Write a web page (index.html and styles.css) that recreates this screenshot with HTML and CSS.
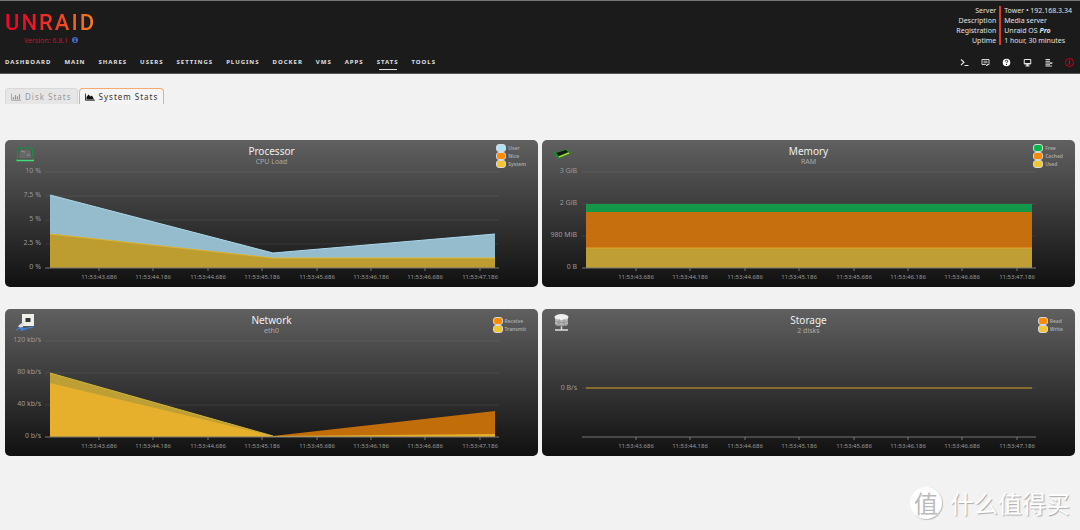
FILE: index.html
```html
<!DOCTYPE html>
<html lang="en">
<head>
<meta charset="utf-8">
<title>Tower/Stats</title>
<link rel="stylesheet" href="styles.css">
</head>
<body>
<svg class="defs" aria-hidden="true">
  <symbol id="time-axis" viewBox="0 0 533 119">
    <path class="axis" d="M40 100H494M94 100v3M148 100v3M203 100v3M257 100v3M312 100v3M366 100v3M420 100v3M475 100v3"/>
    <g class="time">
      <text x="94" y="111">11:53:43.686</text><text x="148" y="111">11:53:44.186</text>
      <text x="203" y="111">11:53:44.686</text><text x="257" y="111">11:53:45.186</text>
      <text x="312" y="111">11:53:45.686</text><text x="366" y="111">11:53:46.186</text>
      <text x="420" y="111">11:53:46.686</text><text x="475" y="111">11:53:47.186</text>
    </g>
  </symbol>
</svg>

<header class="header">
  <div class="top">
    <div class="brand">
      <a class="logo" href="#">UNRAID</a>
      <div class="version">Version: 6.8.1
        <svg class="info" viewBox="0 0 12 12"><circle cx="6" cy="6" r="6" fill="#4a66c4"/><path d="M5 2h2.200v1.800H5zM4.300 5h2.900v3.500h.8V10H4.300V8.500H5V6.300h-.7z" fill="#1c1b1b"/></svg>
      </div>
    </div>
    <div class="server">
      <div class="labels"><span>Server</span><span>Description</span><span>Registration</span><span>Uptime</span></div>
      <div class="values"><span>Tower • 192.168.3.34</span><span>Media server</span><span>Unraid OS <strong><em>Pro</em></strong></span><span>1 hour, 30 minutes</span></div>
    </div>
  </div>
  <div class="bar">
    <nav class="menu">
      <a href="#">DASHBOARD</a><a href="#">MAIN</a><a href="#">SHARES</a><a href="#">USERS</a><a href="#">SETTINGS</a><a href="#">PLUGINS</a><a href="#">DOCKER</a><a href="#">VMS</a><a href="#">APPS</a><a class="current" href="#">STATS</a><a href="#">TOOLS</a>
    </nav>
    <div class="tools">
      <button aria-label="Terminal"><svg viewBox="0 0 18 18"><path d="M2 3l6 5.500L2 14M9 15h8" fill="none" stroke="#e8e8e8" stroke-width="2.200"/></svg></button>
      <button aria-label="Feedback"><svg viewBox="0 0 18 18"><path d="M2 3h14v10h-4v3l-3-3H2z" fill="none" stroke="#e8e8e8" stroke-width="1.800"/><path d="M5 6.500h8M5 9.500h8" stroke="#e8e8e8" stroke-width="1.500"/></svg></button>
      <button aria-label="Help"><svg viewBox="0 0 18 18"><circle cx="9" cy="9" r="7.500" fill="#fff"/><path d="M6.500 7c0-3.500 5-3.300 5-.4C11.500 8.500 9 8.500 9 10.500M9 12v2" fill="none" stroke="#1c1b1b" stroke-width="2"/></svg></button>
      <button aria-label="Info"><svg viewBox="0 0 18 18"><path d="M2.500 3h13v9h-13z" fill="none" stroke="#e8e8e8" stroke-width="2"/><path d="M3 10h12v2H3zM7 12h4v3h2v2H5v-2h2z" fill="#e8e8e8"/></svg></button>
      <button aria-label="Log"><svg viewBox="0 0 18 18"><path d="M3 3h9M3 6.500h9M3 10h13M3 13.500h9M3 16h13" stroke="#d8d8d8" stroke-width="2"/><path d="M12 11l5-1" stroke="#d8d8d8" stroke-width="2"/></svg></button>
      <button aria-label="Alerts"><svg viewBox="0 0 18 18"><circle cx="9" cy="9" r="8" fill="none" stroke="#d3001f" stroke-width="1.800"/><path d="M9 4.500v9" stroke="#d3001f" stroke-width="2.400"/></svg></button>
    </div>
  </div>
</header>

<main class="content">
  <div class="tabs" role="tablist">
    <button class="tab" role="tab" aria-selected="false"><svg viewBox="0 0 20 16"><path d="M1 1v13.500h19" fill="none" stroke="#999" stroke-width="1.600"/><path d="M5 13V8M9 13V4M13 13V6.500M17 13V2.500" stroke="#999" stroke-width="2.400"/></svg>Disk Stats</button>
    <button class="tab active" role="tab" aria-selected="true"><svg viewBox="0 0 20 16"><path d="M1 1v13.500h19" fill="none" stroke="#111" stroke-width="1.600"/><path d="M3 13V8l4-5 4 4 3-2 4 8z" fill="#111"/></svg>System Stats</button>
  </div>

  <div class="panels">
    <section class="panel">
      <header class="panel-head">
        <svg class="icon" viewBox="0 0 20 20"><path d="M3.500 4h13.500l1.500 12.500H2z" fill="#555" stroke="#179447"/><path d="M5 5.500h10.500l1 8.500H4z" fill="#686868"/><path d="M1.500 16.500h17.500" stroke="#3be077" stroke-width="1.400"/><path d="M6 7l4 1M12 11h3" stroke="#929292"/></svg>
        <div class="heading"><h2>Processor</h2><p>CPU Load</p></div>
        <ul class="legend"><li class="blue">User</li><li class="orange">Nice</li><li class="yellow">System</li></ul>
      </header>
      <svg class="chart" viewBox="0 0 533 119" role="img" aria-label="CPU load">
        <path class="grid" d="M40 4H494M40 28H494M40 52H494M40 76H494"/>
        <g class="scale"><text x="36" y="5">10 %</text><text x="36" y="29">7.5 %</text><text x="36" y="53">5 %</text><text x="36" y="77">2.5 %</text><text x="36" y="101">0 %</text></g>
        <path d="M45 27L268 85L490 66V90H268L45 66z" fill="#94bccd"/>
        <path d="M45 66L268 90H490V100H45z" fill="#bd9c30"/>
        <path d="M45 27L268 85L490 66" fill="none" stroke="#a9d8ea"/>
        <path d="M45 66L268 90H490" fill="none" stroke="#e0b83a"/>
        <use href="#time-axis" width="533" height="119"/>
      </svg>
    </section>

    <section class="panel">
      <header class="panel-head">
        <svg class="icon" viewBox="0 0 20 20"><path d="M1 9l14-4 4 4L7 15z" fill="#198e22"/><path d="M4 9l10-3 2 2L7 12z" fill="#181818"/><path d="M7 13l10-4" stroke="#d9e33a" stroke-width="1.300"/></svg>
        <div class="heading"><h2>Memory</h2><p>RAM</p></div>
        <ul class="legend"><li class="green">Free</li><li class="orange">Cached</li><li class="yellow">Used</li></ul>
      </header>
      <svg class="chart" viewBox="0 0 533 119" role="img" aria-label="Memory use">
        <path class="grid" d="M40 4H494M40 36H494M40 68H494"/>
        <g class="scale"><text x="35" y="5">3 GiB</text><text x="35" y="37">2 GiB</text><text x="35" y="69">980 MiB</text><text x="35" y="101">0 B</text></g>
        <path d="M44 36H490V44H44z" fill="#129848"/>
        <path d="M44 44H490V80H44z" fill="#c56f0e"/>
        <path d="M44 80H490V100H44z" fill="#bf9f33"/>
        <path d="M44 80H490" stroke="#dfa42b"/>
        <use href="#time-axis" width="533" height="119"/>
      </svg>
    </section>

    <section class="panel">
      <header class="panel-head">
        <svg class="icon" viewBox="0 0 20 20"><path d="M7 1h12v12H7z" fill="#efefea"/><path d="M10.500 5h5v4h-5z" fill="#333"/><path d="M3 13l5-4 2 2-4 5z" fill="#ddd"/><path d="M2 17.500c-1-3 9-3 6-1.500s-3 2 2 0 6-1 8-1.500" fill="none" stroke="#3f7fd6" stroke-width="1.400"/></svg>
        <div class="heading"><h2>Network</h2><p>eth0</p></div>
        <ul class="legend"><li class="orange">Receive</li><li class="yellow">Transmit</li></ul>
      </header>
      <svg class="chart" viewBox="0 0 533 119" role="img" aria-label="Network traffic">
        <path class="grid" d="M40 4H494M40 36H494M40 68H494"/>
        <g class="scale"><text x="36" y="5">120 kb/s</text><text x="36" y="37">80 kb/s</text><text x="36" y="69">40 kb/s</text><text x="36" y="101">0 b/s</text></g>
        <path d="M45 36L268 99L490 97V100H45z" fill="#bd9f36"/>
        <path d="M45 46L268 99V100H45z" fill="#e6b02c"/>
        <path d="M268 99L490 74V100H268z" fill="#c16d0a"/>
        <path d="M268 99L490 97V100H268z" fill="#e6b02c"/>
        <path d="M45 36L268 99" stroke="#d6b43c"/>
        <use href="#time-axis" width="533" height="119"/>
      </svg>
    </section>

    <section class="panel">
      <header class="panel-head">
        <svg class="icon" viewBox="0 0 20 20"><path d="M3 4v7c0 3 13 3 13 0V4z" fill="#b5b5b5"/><ellipse cx="9.500" cy="4" rx="7" ry="3" fill="#eee"/><path d="M3 8c2 2 11 2 13 0M3 11c2 2 11 2 13 0M7 6v7M12 6v7" fill="none" stroke="#8c8c8c" stroke-width=".8"/><path d="M9.500 13.500v3M3 17h13" stroke="#ddd" stroke-width="1.500"/></svg>
        <div class="heading"><h2>Storage</h2><p>2 disks</p></div>
        <ul class="legend"><li class="orange">Read</li><li class="yellow">Write</li></ul>
      </header>
      <svg class="chart" viewBox="0 0 533 119" role="img" aria-label="Disk traffic">
        <path class="grid" d="M40 51H494"/>
        <g class="scale"><text x="35" y="53">0 B/s</text></g>
        <path d="M44 51H490" stroke="#d19a22"/>
        <use href="#time-axis" width="533" height="119"/>
      </svg>
    </section>
  </div>
</main>

<div class="watermark"><span class="seal">值</span><span>什么值得买</span></div>
</body>
</html>
```
FILE: styles.css
```css
*, *::before { box-sizing: border-box; }
body {
  margin: 0;
  min-height: 100vh;
  background: #f2f2f2;
  color: #e0e0e0;
  font-family: "Noto Sans", "Noto Sans CJK SC", sans-serif;
  font-size: 7px;
}
a { color: inherit; text-decoration: none; }
button { border: 0; padding: 0; background: none; font: inherit; color: inherit; cursor: pointer; }
.defs { display: none; }

.header {
  background: #1c1b1b;
  border-top: 1px solid #777;
  border-bottom: 1px solid #555;
}
.top { display: flex; justify-content: space-between; padding: 5px 5px 0; height: 50px; }
.brand { width: 92px; padding-top: 4px; }
.logo {
  display: block;
  height: 24px;
  line-height: 26px;
  font-family: Roboto, sans-serif;
  font-size: 22px;
  font-weight: 500;
  letter-spacing: 2px;
  white-space: nowrap;
  background: linear-gradient(90deg, #f0082a 20%, #f58220);
  background-clip: text;
  color: transparent;
}
.version { display: flex; align-items: center; justify-content: center; gap: 4px; height: 12px; color: #c4102a; }
.info { width: 6px; height: 6px; }
.server { display: flex; line-height: 10px; }
.server span { display: block; }
.labels { text-align: right; padding-right: 3px; border-right: 2px solid #e23a20; height: 39px; }
.values { padding: 0 3px; }

.bar { display: flex; justify-content: space-between; align-items: center; height: 22px; padding: 0 6px 0 5px; }
.menu { display: flex; gap: 13px; font-size: 6px; font-weight: 700; letter-spacing: 1px; line-height: 15px; }
.current { background: linear-gradient(#e0e0e0, #e0e0e0) center bottom / 18px 1px no-repeat; }
.tools { display: flex; gap: 12px; }
.tools button { width: 9px; height: 9px; }
.tools svg { display: block; width: 9px; height: 9px; }

.content { padding: 14px 5px 0; }
.tabs { display: flex; gap: 1px; }
.tab {
  display: flex;
  align-items: center;
  gap: 4px;
  height: 16px;
  padding: 0 5px;
  border: 1px solid #d8d8d8;
  border-bottom: 0;
  border-radius: 4px 4px 0 0;
  background: #e6e6e6;
  color: #999;
  font-size: 8px;
  letter-spacing: 1px;
}
.tab svg { width: 10px; height: 8px; }
.active { background: #f4f4f4; border-color: #f5aa70; color: #333; }

.panels { display: grid; grid-template-columns: 1fr 1fr; gap: 22px 4px; padding-top: 36px; }
.panel {
  background: linear-gradient(#606060, #101010);
  border-radius: 5px;
  overflow: hidden;
}
.panel-head {
  display: grid;
  grid-template-columns: 1fr auto 1fr;
  align-items: center;
  height: 28px;
  padding: 4px 10px 0;
}
.icon { width: 20px; height: 20px; align-self: start; }
.heading { text-align: center; }
.heading h2 { margin: 0; font-size: 10px; font-weight: 400; line-height: 12px; color: #f0f0f0; }
.heading p { margin: 0; font-size: 7px; line-height: 10px; color: #aaa; }
.legend { margin: 0; padding: 0 2px 0 0; list-style: none; justify-self: end; font-size: 5px; line-height: 8px; color: #aaa; font-weight: 600; }
.legend li { display: flex; align-items: center; gap: 2px; }
.legend li::before { content: ""; width: 10px; height: 8px; border: 1px solid #d8d8d8; border-radius: 3px; background: var(--swatch); }
.blue { --swatch: #aee3f8; }
.orange { --swatch: #ff8c00; }
.yellow { --swatch: #f2c632; }
.green { --swatch: #05b848; }

.chart { display: block; width: 100%; height: auto; overflow: visible; }
.grid { stroke: #fff; stroke-opacity: 0.08; fill: none; }
.axis { stroke: #777; fill: none; }
.scale { fill: #999; font-size: 7px; text-anchor: end; }
.time { fill: #999; font-size: 6px; text-anchor: middle; }

.watermark {
  position: absolute;
  right: 10px;
  bottom: 11px;
  display: flex;
  align-items: center;
  gap: 8px;
  color: #fff;
  font-family: "Noto Sans CJK SC", sans-serif;
  font-size: 24px;
  line-height: 32px;
  text-shadow: 1px 1px 1px #aaa;
}
.seal {
  width: 32px;
  height: 32px;
  border-radius: 50%;
  background: #fff;
  box-shadow: 1px 1px 1px #bbb;
  color: #bbb;
  text-align: center;
  text-shadow: none;
}
```
